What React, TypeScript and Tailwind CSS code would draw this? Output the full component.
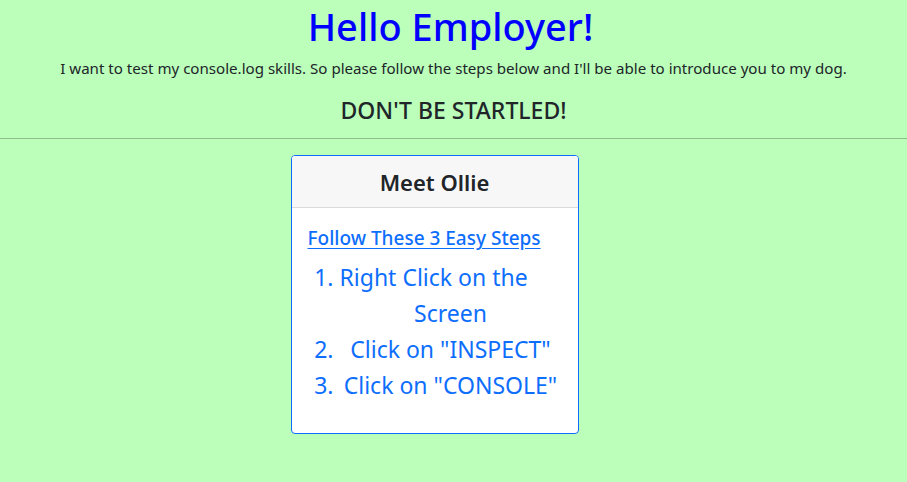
import React from "react";

export default function App() {
  return (
    <div
      className="min-h-[482px] w-full bg-[#bbffbb] text-[#212529]"
      style={{ fontFamily: '"Noto Sans", "Open Sans", sans-serif' }}
    >
      <div className="flex flex-col items-center text-center">
        <h1 className="m-0 pt-[2px] pr-[6px] text-[38px] font-medium leading-[48px] text-[#0000ff]">
          Hello Employer!
        </h1>
        <p className="mt-[6px] text-[15.1px] leading-[24px]">
          I want to test my console.log skills. So please follow the steps below and I'll be able to introduce you to my dog.
        </p>
        <h4 className="mt-[16px] text-[23px] font-medium leading-[28px]">DON'T BE STARTLED!</h4>
      </div>
      <hr className="mt-[14px] border-0 border-t border-[#8cbf8c]" />
      <div className="flex justify-center pr-[38px] pt-[16px]">
        <div className="w-[288px] overflow-hidden rounded-[4px] border border-[#0d6efd] bg-white">
          <div className="flex h-[52px] items-center justify-center border-b border-[#dadada] bg-[#f7f7f7]">
            <h3 className="text-[22px] font-semibold leading-[28px] text-[#212529]">Meet Ollie</h3>
          </div>
          <div className="px-4 pb-[30px] pt-[16px]">
            <a href="#" className="block text-[19px] font-medium leading-[28px] text-[#0d6efd] underline underline-offset-[3px]">
              Follow These 3 Easy Steps
            </a>
            <ol className="mt-[7px] list-decimal pl-8 text-center text-[23px] leading-[36px] text-[#0d6efd]">
              <li>
                <span className="block text-left">Right Click on the</span>
                <span className="block">Screen</span>
              </li>
              <li>Click on "INSPECT"</li>
              <li>Click on "CONSOLE"</li>
            </ol>
          </div>
        </div>
      </div>
    </div>
  );
}
